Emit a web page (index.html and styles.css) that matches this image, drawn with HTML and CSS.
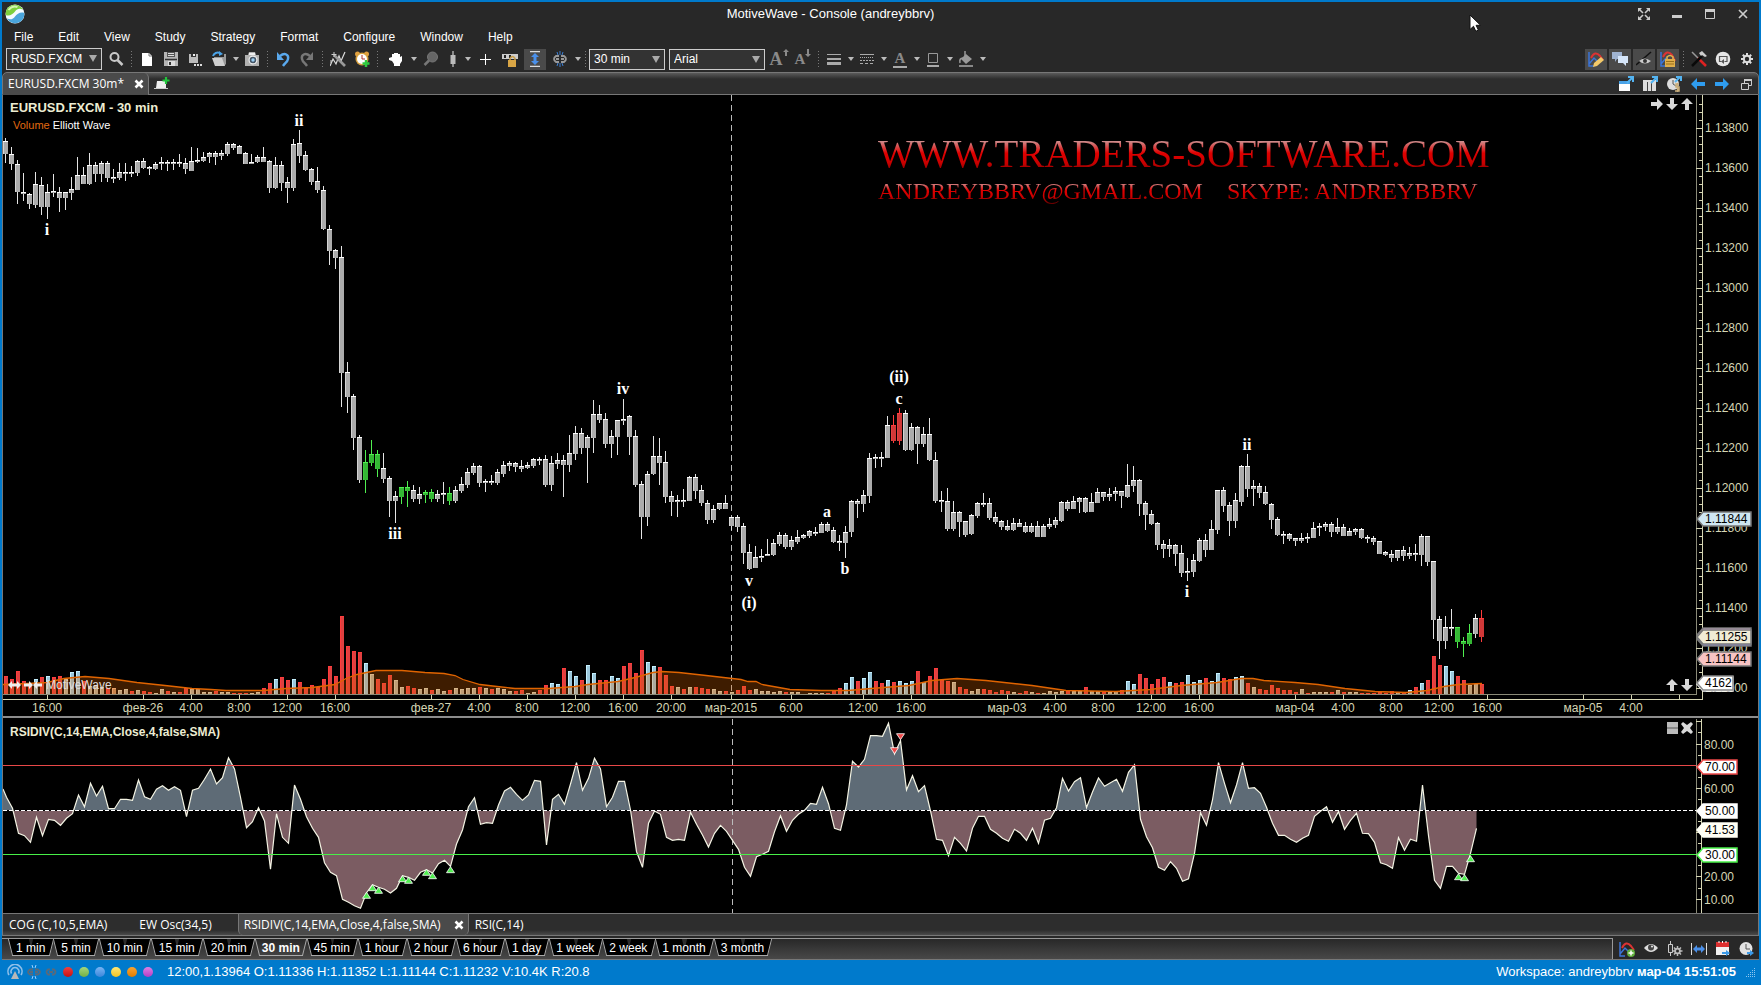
FILE: index.html
```html
<!DOCTYPE html>
<html lang="en">
<head>
    <meta charset="UTF-8">
    <meta name="viewport" content="width=device-width, initial-scale=1.0">
    <title>MotiveWave - Console (andreybbrv)</title>
    <link rel="stylesheet" href="styles.css">
</head>
<body>
<div class="window">
    <header class="titlebar">
        <svg class="logo" viewBox="0 0 20 20"><circle cx="10" cy="10" r="9.5" fill="#f4fbff"/><path d="M.8 11C0 4 6 0 11 .8c4 .6 6 3 7 5-3-2-6-1.300-8 1.700S4 12.500.8 11z" fill="#7ccf3e"/><path d="M19.200 9c.8 7-5.200 11-10.200 10.200-4-.6-6-3-7-5 3 2 6 1.300 8-1.700s6-5 9.200-3.500z" fill="#4aa5dc"/><path d="M3.500 6q4-5 9-3" stroke="#d4f5b0" stroke-width="2" fill="none"/></svg>
        <h1>MotiveWave - Console (andreybbrv)</h1>
        <div class="window-controls">
            <button aria-label="Full screen"><svg viewBox="0 0 16 16"><path d="M3 3l4 4M13 3L9 7M3 13l4-4M13 13L9 9" stroke="#ccc" stroke-width="1.6"/><path d="M2 2h4L2 6zM14 2v4l-4-4zM2 14v-4l4 4zM14 14h-4l4-4z" fill="#ccc"/></svg></button>
            <button aria-label="Minimize"><svg viewBox="0 0 16 16"><path d="M3 9h10v3H3z" fill="#ccc"/></svg></button>
            <button aria-label="Maximize"><svg viewBox="0 0 16 16"><path d="M3.500 3.500h9v9h-9z" fill="none" stroke="#ccc"/><path d="M3 3h10v3H3z" fill="#ccc"/></svg></button>
            <button aria-label="Close"><svg viewBox="0 0 16 16"><path d="M4 4l8 8M12 4l-8 8" stroke="#ccc" stroke-width="1.700"/></svg></button>
        </div>
    </header>
    <svg class="cursor" viewBox="0 0 12 19"><path d="M1 1v14.500l3.500-3.200 2.300 5 2.600-1.200-2.300-4.800h4.500z" fill="#fff" stroke="#111" stroke-width="1"/></svg>

    <nav class="menu">
        <a href="#">File</a><a href="#">Edit</a><a href="#">View</a><a href="#">Study</a><a href="#">Strategy</a><a href="#">Format</a><a href="#">Configure</a><a href="#">Window</a><a href="#">Help</a>
    </nav>

    <div class="toolbar">
        <div class="combo symbol"><input type="text" value="RUSD.FXCM" aria-label="Symbol"></div>
        <button class="tool" aria-label="Search"><svg viewBox="0 0 16 16"><circle cx="6.500" cy="6" r="4" fill="none" stroke="#c8c8c8" stroke-width="2"/><path d="M9.500 9l5 5" stroke="#c8c8c8" stroke-width="2.500"/></svg></button>
        <span class="sep"></span>
        <button class="tool" aria-label="New"><svg viewBox="0 0 16 16"><path d="M3 2h7l3 3v10H3z" fill="#fff"/><path d="M10 2v3h3" fill="none" stroke="#777"/></svg></button>
        <button class="tool" aria-label="Save"><svg viewBox="0 0 16 16"><path d="M1 1h14v14H1z" fill="#b5b5b5"/><path d="M4 1h8v5H4z" fill="#555"/><path d="M5 2.500h6M5 4.500h6" stroke="#ddd"/><path d="M2 8.500h12" stroke="#333" stroke-width="1.500"/><path d="M5 10h7v5H5z" fill="#ddd"/><path d="M6 11h2v3H6z" fill="#333"/></svg></button>
        <button class="tool" aria-label="Save as"><svg viewBox="0 0 16 16"><path d="M2 3h9v9H2z" fill="#bbb"/><path d="M4 3h5v3H4z" fill="#333"/><path d="M6 3h2v2H6z" fill="#eee"/><path d="M7 13h2v2H7zM10 13h2v2h-2zM13 13h2v2h-2z" fill="#ddd"/></svg></button>
        <button class="tool" aria-label="Open"><svg viewBox="0 0 16 16"><path d="M3 6h10V3h2v10l-2 2H4z" fill="#999"/><path d="M1 7h10l3 8H4z" fill="#d0d0d0"/><path d="M2 5c1-3 4-4 7-3" fill="none" stroke="#4aa3e8" stroke-width="2"/><path d="M8 0l4 3-4 2z" fill="#4aa3e8"/></svg></button>
        <button class="caret" aria-label="Open menu"></button>
        <button class="tool" aria-label="Camera"><svg viewBox="0 0 16 16"><path d="M1 4h3l1-3h6l1 3h3v11H1z" fill="#b0b0b0"/><path d="M5 2h6v2H5z" fill="#eee"/><circle cx="9" cy="9" r="4.500" fill="#eee"/><circle cx="9" cy="9" r="3.300" fill="#456"/><circle cx="9" cy="9" r="1.700" fill="#9cd0f4"/></svg></button>
        <span class="sep"></span>
        <button class="tool" aria-label="Undo"><svg viewBox="0 0 16 16"><path d="M5 5c5-4 9-1 8 3-.5 3-3 4-5 7" fill="none" stroke="#5aa9ee" stroke-width="2.400"/><path d="M2 1v8h7z" fill="#5aa9ee"/></svg></button>
        <button class="tool" aria-label="Redo"><svg viewBox="0 0 16 16"><path d="M11 5C6 1 2 4 3 8c.5 3 3 4 5 7" fill="none" stroke="#777" stroke-width="2.400"/><path d="M14 1v8H7z" fill="#777"/></svg></button>
        <span class="sep"></span>
        <button class="tool" aria-label="Elliott tools"><svg viewBox="0 0 16 16"><path d="M0 15l3-7 3 5 3-8 2 5 4-9" fill="none" stroke="#ddd" stroke-width="1.200"/><path d="M4 4l11 11" stroke="#999" stroke-width="2.600"/><path d="M4 1v5M1.500 3.500h5M1 9v3" stroke="#ccc"/></svg></button>
        <button class="tool" aria-label="Add alert"><svg viewBox="0 0 16 16"><circle cx="3.500" cy="3" r="2.500" fill="#e0a040"/><circle cx="12.500" cy="3" r="2.500" fill="#e0a040"/><circle cx="8" cy="8" r="6.500" fill="#d8a03c"/><circle cx="8" cy="8" r="5" fill="#fff"/><path d="M8 4v4h3" fill="none" stroke="#a33"/><path d="M12 9v7M8.500 12.500h7" stroke="#2ecc40" stroke-width="2.500"/></svg></button>
        <span class="sep"></span>
        <div class="tools">
            <button class="tool" aria-label="Hand"><svg viewBox="0 0 16 16"><path d="M1 7l3-1V3h2v3V2h2v4V2h2v4V3h2v3l2-1v5l-2 3v2H6v-2l-2-3-3-1z" fill="#fff"/></svg></button>
            <button class="caret" aria-label="Hand menu"></button>
            <button class="tool" aria-label="Magnify"><svg viewBox="0 0 16 16"><circle cx="9.500" cy="6" r="5" fill="#666" stroke="#777"/><path d="M6 9.500L1.500 14" stroke="#777" stroke-width="2.500"/></svg></button>
            <button class="tool narrow" aria-label="Bar type"><svg viewBox="0 0 16 16"><path d="M8 0v16" stroke="#ccc" stroke-width="1.200"/><path d="M5.500 4h5v9h-5z" fill="#bbb"/></svg></button>
            <button class="caret" aria-label="Bar type menu"></button>
            <button class="tool" aria-label="Crosshair"><svg viewBox="0 0 16 16"><path d="M8.500 3v11M3 8.500h11" stroke="#fff"/></svg></button>
            <button class="tool" aria-label="Lock drawings"><svg viewBox="0 0 16 16"><path d="M0 3h16v5H0z" fill="#ccc"/><path d="M2 4h2v3H2zM7 4h2v3H7z" fill="#222"/><path d="M8 9V7.500q2.500-4 5 0V9" fill="none" stroke="#c9a04e" stroke-width="1.500"/><path d="M6 9h8v7H6z" fill="#d9a545"/></svg></button>
            <button class="tool on" aria-label="Fit vertically"><svg viewBox="0 0 16 16"><path d="M3 .5h10M3 15.500h10" stroke="#ddd" stroke-width="1.300"/><path d="M8 2l4 4H9.500v4H12l-4 4-4-4h2.500V6H4z" fill="#4a90ea"/></svg></button>
            <button class="tool" aria-label="Link"><svg viewBox="0 0 16 16"><path d="M7 5H4q-4 3 0 6h3M9 5h3q4 3 0 6H9M4 8h3M9 8h3" fill="none" stroke="#999" stroke-width="1.800"/><path d="M8 0v4M5 1l1 3M11 1l-1 3M8 12v4M5 15l1-3M11 15l-1-3" stroke="#3b7dd0"/></svg></button>
            <button class="caret" aria-label="Link menu"></button>
        </div>
        <span class="sep"></span>
        <div class="combo period"><select aria-label="Bar size"><option>30 min</option></select></div>
        <div class="combo font"><select aria-label="Font"><option>Arial</option></select></div>
        <button class="tool serif" aria-label="Larger font">A<svg viewBox="0 0 6 8"><path d="M3 0l3 3H4v4H2V3H0z" fill="#8a8a8a"/></svg></button>
        <button class="tool serif small" aria-label="Smaller font">A<svg viewBox="0 0 6 8"><path d="M3 8L0 5h2V0h2v5h2z" fill="#8a8a8a"/></svg></button>
        <span class="sep"></span>
        <button class="tool" aria-label="Line width"><svg viewBox="0 0 16 16"><path d="M1 3.500h14" stroke="#aaa"/><path d="M1 8h14" stroke="#aaa" stroke-width="2"/><path d="M1 12.500h14" stroke="#aaa" stroke-width="3"/></svg></button>
        <button class="caret" aria-label="Line width menu"></button>
        <button class="tool" aria-label="Line style"><svg viewBox="0 0 16 16"><path d="M1 3.500h14" stroke="#aaa"/><path d="M1 6.500h14" stroke="#aaa" stroke-dasharray="1 1"/><path d="M1 9.500h14" stroke="#aaa" stroke-dasharray="2 1"/><path d="M1 12.500h14" stroke="#aaa" stroke-dasharray="3 2"/></svg></button>
        <button class="caret" aria-label="Line style menu"></button>
        <button class="tool serif under" aria-label="Text colour">A</button>
        <button class="caret" aria-label="Text colour menu"></button>
        <button class="tool" aria-label="Line colour"><svg viewBox="0 0 16 16"><path d="M3.500 2.500h9v9h-9z" fill="none" stroke="#999"/><path d="M2 14h12v2H2z" fill="#aaa"/></svg></button>
        <button class="caret" aria-label="Line colour menu"></button>
        <button class="tool" aria-label="Fill colour"><svg viewBox="0 0 16 16"><path d="M8 3l6 5-6 5-5-5z" fill="#999"/><path d="M7 0v8M2 12q-1-5 3-5" fill="none" stroke="#999" stroke-width="1.500"/><path d="M1 14h14v2H1z" fill="#888"/></svg></button>
        <button class="caret" aria-label="Fill colour menu"></button>

        <div class="toolbar-end">
            <button class="tool on" aria-label="Show components"><svg viewBox="0 0 16 16"><path d="M1 1v14h5M1 13l5-6 4 4" fill="none" stroke="#3b74d8" stroke-width="1.500"/><path d="M3 7q4-8 9-2l3 4" fill="none" stroke="#d33" stroke-width="2"/><path d="M13 6l3 3-7 6-4 1 1-4z" fill="#f3c969"/></svg></button>
            <button class="tool on" aria-label="Comments"><svg viewBox="0 0 16 16"><path d="M0 1h10v7H5l-2 3V8H0z" fill="#9fb3d1"/><path d="M6 5h10v7h-2v3l-3-3H6z" fill="#d6e6fa"/></svg></button>
            <button class="tool on" aria-label="Hide lines"><svg viewBox="0 0 16 16"><path d="M0 14L15 1" stroke="#111" stroke-width="1.500"/><path d="M3 10q5-5 12 0-6 5-12 0z" fill="#ccc"/><circle cx="9" cy="10" r="2" fill="#333"/></svg></button>
            <button class="tool on" aria-label="Lock components"><svg viewBox="0 0 16 16"><path d="M1 1v14h5M1 13l5-6" fill="none" stroke="#3b74d8" stroke-width="1.500"/><path d="M3 6q4-8 9-2l3 6" fill="none" stroke="#d33" stroke-width="2"/><path d="M7 9V6q3-3 6 0v3" fill="none" stroke="#ddb34e" stroke-width="1.600"/><path d="M5 8h10v8H5z" fill="#e0ae4a"/><path d="M6 10.500h8M6 13h8" stroke="#9a6f1c"/></svg></button>
            <span class="sep"></span>
            <button class="tool" aria-label="Tools"><svg viewBox="0 0 16 16"><path d="M1 1l6 6" stroke="#999" stroke-width="1.500"/><path d="M7 7l8 8" stroke="#d22" stroke-width="2.500"/><path d="M11 5L1 15" stroke="#0a0a0a" stroke-width="2.500"/><path d="M8 2l3-2 5 5-2 1-3-2-1 1z" fill="#ccc"/></svg></button>
            <button class="tool" aria-label="Replay"><svg viewBox="0 0 16 16"><circle cx="8" cy="8" r="7.300" fill="#e6e6e6"/><path d="M9.500 10.500H12v-5H4.500v5h2" fill="none" stroke="#555" stroke-width="1.200"/><path d="M9 8v5l-3-2.500z" fill="#555"/></svg></button>
            <button class="tool" aria-label="Preferences"><svg viewBox="0 0 16 16"><path d="M8 2v12M2 8h12M3.800 3.800l8.400 8.400M12.200 3.800l-8.400 8.400" stroke="#ddd" stroke-width="2"/><circle cx="8" cy="8" r="4.200" fill="#ddd"/><circle cx="8" cy="8" r="2.200" fill="#282828"/></svg></button>
        </div>
    </div>

    <div class="tabstrip">
        <div class="tab">EURUSD.FXCM 30m* <button class="tab-close" aria-label="Close tab"><svg viewBox="0 0 10 10"><path d="M1.500 1.500l7 7M8.500 1.500l-7 7" stroke="#fff" stroke-width="2.600"/></svg></button></div>
        <button class="tab-add" aria-label="Add tab"><svg viewBox="0 0 16 14"><path d="M3 4h9v7H2z" fill="#eee"/><path d="M0 11.500h14" stroke="#ccc"/><path d="M12 0v7M8.500 3.500h7" stroke="#22c33c" stroke-width="2.200"/></svg></button>
        <div class="tabstrip-end">
            <button class="tool" aria-label="New window"><svg viewBox="0 0 16 16"><path d="M1 5h11v10H1z" fill="#fff"/><path d="M1 5h11v3H1z" fill="#4aa3e8"/><path d="M9 7l5-5M10 1h5v5" fill="none" stroke="#54b4f2" stroke-width="2"/></svg></button>
            <button class="tool" aria-label="Columns"><svg viewBox="0 0 16 16"><path d="M1 4h13v11H1z" fill="#ddd"/><path d="M5.500 6v9M9.500 6v9" stroke="#444"/><path d="M9 7l5-5M10 1h5v5" fill="none" stroke="#54b4f2" stroke-width="2"/></svg></button>
            <button class="tool" aria-label="Account"><svg viewBox="0 0 16 16"><circle cx="7" cy="8" r="6" fill="#ddd"/><path d="M7 4v4l3 2" fill="none" stroke="#555"/><path d="M13 8h-3v3h3v4h-4M11.500 7v9" fill="none" stroke="#c9ae7c" stroke-width="1.500"/><path d="M9 6l5-5M10 1h5v4" fill="none" stroke="#54b4f2" stroke-width="2"/></svg></button>
            <button class="tool" aria-label="Back"><svg viewBox="0 0 16 16"><path d="M1 8l6-6v4h8v4H7v4z" fill="#2f9df0"/></svg></button>
            <button class="tool" aria-label="Forward"><svg viewBox="0 0 16 16"><path d="M15 8L9 2v4H1v4h8v4z" fill="#2f9df0"/></svg></button>
            <button class="tool" aria-label="Restore"><svg viewBox="0 0 16 16"><path d="M6.500 3.500h7v6h-7z" fill="none" stroke="#ccc"/><path d="M6 4h8" stroke="#ccc" stroke-width="2"/><path d="M3.500 7.500h7v6h-7z" fill="#2d2d2d" stroke="#ccc"/></svg></button>
        </div>
    </div>

    <main class="charts">
        <section class="price-chart">
            <div class="plot-row">
                <div class="plot">
                    <svg id="price" height="600"></svg>
                    <div class="plot-title">
                        <h2>EURUSD.FXCM - 30 min</h2>
                        <p><span class="volume">Volume</span> Elliott Wave</p>
                    </div>
                    <div class="banner">
                        <div class="site">WWW.TRADERS-SOFTWARE.COM</div>
                        <div class="contacts"><span>ANDREYBBRV@GMAIL.COM</span><span>SKYPE: ANDREYBBRV</span></div>
                    </div>
                    <div class="plot-tools top">
                        <svg viewBox="0 0 12 12"><path d="M12 6L6 0v4H0v4h6v4z"/></svg><svg viewBox="0 0 12 12"><path d="M6 12l6-6H8V0H4v6H0z"/></svg><svg viewBox="0 0 12 12"><path d="M6 0L0 6h4v6h4V6h4z"/></svg>
                    </div>
                    <div class="plot-tools bottom">
                        <svg viewBox="0 0 12 12"><path d="M6 0L0 6h4v6h4V6h4z"/></svg><svg viewBox="0 0 12 12"><path d="M6 12l6-6H8V0H4v6H0z"/></svg>
                    </div>
                    <div class="brand">
                        <svg viewBox="0 0 34 8"><path d="M0 4l4-4v2.500h5V0l4 4-4 4V5.500H4V8zM25 4l-4-4v2.500h-5v3h5V8zM25 4l4-4v2.500h5v3h-5V8z"/></svg>MotiveWave
                    </div>
                </div>
                <svg id="price-axis" width="62" height="600"></svg>
            </div>
            <svg id="time-axis" height="21"></svg>
        </section>

        <section class="study">
            <div class="plot-row">
                <div class="plot">
                    <svg id="rsi" height="194"></svg>
                    <h2 class="study-title">RSIDIV(C,14,EMA,Close,4,false,SMA)</h2>
                    <div class="plot-tools top">
                        <svg viewBox="0 0 12 12"><path d="M1 0h11v12H1z" fill="#bbb"/><path d="M1 6h11" stroke="#555"/></svg><svg viewBox="0 0 12 12"><path d="M2 0l4 3 4-3 2 2-3 4 3 4-2 2-4-3-4 3-2-2 3-4-3-4z"/></svg>
                    </div>
                </div>
                <svg id="rsi-axis" width="62" height="194"></svg>
            </div>
            <div class="study-tabs">
                <a href="#">COG (C,10,5,EMA)</a>
                <a href="#">EW Osc(34,5)</a>
                <div class="active">RSIDIV(C,14,EMA,Close,4,false,SMA) <button class="tab-close" aria-label="Close study"><svg viewBox="0 0 10 10"><path d="M1.500 1.500l7 7M8.500 1.500l-7 7" stroke="#fff" stroke-width="2.600"/></svg></button></div>
                <a href="#">RSI(C,14)</a>
            </div>
        </section>
    </main>

    <div class="bottom-bar">
        <div class="timeframes">
            <button><span>1 min</span></button><button><span>5 min</span></button><button><span>10 min</span></button><button><span>15 min</span></button><button><span>20 min</span></button><button class="active"><span>30 min</span></button><button><span>45 min</span></button><button><span>1 hour</span></button><button><span>2 hour</span></button><button><span>6 hour</span></button><button><span>1 day</span></button><button><span>1 week</span></button><button><span>2 week</span></button><button><span>1 month</span></button><button><span>3 month</span></button>
        </div>
        <div class="bottom-tools">
            <button class="tool" aria-label="Add study"><svg viewBox="0 0 16 16"><path d="M1 1v14h5M1 13l5-6 4 4" fill="none" stroke="#3b74d8" stroke-width="1.500"/><path d="M3 7q4-8 9-2l3 4" fill="none" stroke="#d33" stroke-width="2"/><circle cx="12" cy="12" r="4" fill="#5fae3c"/><path d="M12 9.500v5M9.500 12h5" stroke="#fff" stroke-width="1.500"/></svg></button>
            <button class="tool" aria-label="Visibility"><svg viewBox="0 0 16 16"><path d="M1 7q7-8 14 0-7 8-14 0z" fill="#ddd"/><circle cx="8" cy="6.500" r="3" fill="#444"/><circle cx="9" cy="5.500" r="1" fill="#eee"/></svg></button>
            <button class="tool" aria-label="Bar settings"><svg viewBox="0 0 16 16"><path d="M3.500 0v15" stroke="#ccc"/><path d="M1.500 3.500h4v8h-4z" fill="#333" stroke="#ccc"/><path d="M10.500 5v10M5.500 10h10M7 6.500l7 7M14 6.500l-7 7" stroke="#bbb" stroke-width="1.500"/><circle cx="10.500" cy="10" r="3.300" fill="#bbb"/><circle cx="10.500" cy="10" r="1.500" fill="#282828"/></svg></button>
            <button class="tool" aria-label="Fit width"><svg viewBox="0 0 16 16"><path d="M.5 2v12M15.500 2v12" stroke="#ddd"/><path d="M2 8l4-4v2.500h4V4l4 4-4 4V9.500H6V12z" fill="#4a90ea"/></svg></button>
            <button class="tool" aria-label="Go to date"><svg viewBox="0 0 16 16"><path d="M1 1h13v13H1z" fill="#f2f2f2"/><path d="M1 1h13v5H1z" fill="#dc3030"/><path d="M4 0v2M7.500 0v2M11 0v2" stroke="#fff"/><path d="M7 12h4" stroke="#3b9ae8" stroke-width="2"/><path d="M11 9l4 3-4 3z" fill="#3b9ae8"/></svg></button>
            <button class="tool" aria-label="Go to time"><svg viewBox="0 0 16 16"><circle cx="7" cy="7.500" r="6.500" fill="#e2e2e2"/><path d="M7 3v5h4" fill="none" stroke="#555"/><path d="M8 12h4" stroke="#3b9ae8" stroke-width="2"/><path d="M11 9l4 3-4 3z" fill="#3b9ae8"/></svg></button>
        </div>
    </div>
</div>

<footer class="status">
    <svg class="signal" viewBox="0 0 16 16"><path d="M2 11A7 7 0 1 1 14 11M4.500 9.500a4 4 0 1 1 7 0" fill="none" stroke="#8fc0ea" stroke-width="1.600"/><path d="M8 7l4 8H4z" fill="#b8b8b8"/></svg>
    <svg class="signal" viewBox="0 0 16 16"><path d="M7 5.500H4q-4 2.500 0 5h3M9 5.500h3q4 2.500 0 5H9M4 8h3M9 8h3" fill="none" stroke="#5a6a7a" stroke-width="1.800"/><path d="M6 1l1 3M10 1L9 4M6 15l1-3M10 15l-1-3" stroke="#9cd0ff"/></svg>
    <svg class="chain" viewBox="0 0 12 16"><path d="M5 5.500H3q-3 2.500 0 5h2M7 5.500h2q3 2.500 0 5H7M4 8h4" fill="none" stroke="#5a6a7a" stroke-width="1.800"/></svg>
    <span class="dot red"></span><span class="dot green"></span><span class="dot blue"></span><span class="dot yellow"></span><span class="dot orange"></span><span class="dot purple"></span>
    <span class="quote">12:00,1.13964 O:1.11336 H:1.11352 L:1.11144 C:1.11232 V:10.4K R:20.8</span>
    <span class="workspace">Workspace: andreybbrv <b>мар-04 15:51:05</b></span>
    <svg class="grip" viewBox="0 0 10 10"><path d="M8 0h1v1H8zM6 2h1v1H6zM8 2h1v1H8zM4 4h1v1H4zM6 4h1v1H6zM8 4h1v1H8zM2 6h1v1H2zM4 6h1v1H4zM6 6h1v1H6zM8 6h1v1H8zM0 8h1v1H0zM2 8h1v1H2zM4 8h1v1H4zM6 8h1v1H6zM8 8h1v1H8z" fill="#8cc6f0"/></svg>
</footer>
<script src="chart.js"></script>
</body>
</html>
```
FILE: styles.css
```css
* {
    box-sizing: border-box;
}
body {
    margin: 0;
    padding: 2px 2px 0;
    background: #007acc;
    color: #fff;
    font: 12px/16px "Liberation Sans", Arial, sans-serif;
    min-height: 100vh;
}
button {
    margin: 0;
    padding: 0;
    border: 0;
    background: none;
    color: inherit;
    font: inherit;
}
a {
    color: inherit;
    text-decoration: none;
}
svg {
    display: block;
}
h1, h2, p {
    margin: 0;
}
.window {
    position: relative;
    background: #282828;
}

/* title and menu */
.titlebar {
    display: flex;
    align-items: center;
    height: 24px;
    padding: 0 4px 0 3px;
}
.logo {
    width: 20px;
    height: 20px;
}
.titlebar h1 {
    flex: 1;
    text-align: center;
    font-size: 13px;
    font-weight: normal;
}
.window-controls {
    display: flex;
    gap: 17px;
    padding-right: 4px;
}
.window-controls svg {
    width: 16px;
    height: 16px;
}
.cursor {
    position: absolute;
    left: calc(100% - 290px);
    top: 12px;
    width: 12px;
    height: 19px;
    z-index: 2;
}
.menu {
    display: flex;
    align-items: center;
    gap: 25px;
    height: 22px;
    padding-left: 12px;
}

/* toolbar */
.toolbar {
    display: flex;
    align-items: center;
    height: 24px;
    padding: 0 0 2px 4px;
}
.tool {
    display: flex;
    align-items: center;
    justify-content: center;
    width: 24px;
    height: 21px;
    flex: none;
}
.tool svg {
    width: 16px;
    height: 16px;
}
.tool.narrow {
    width: 18px;
}
.tool.on {
    background: #4a4a4a;
    width: 22px;
    margin: 0 1px;
}
.tool.serif {
    font: bold 18px/20px "Liberation Serif", serif;
    color: #8a8a8a;
    align-items: flex-start;
}
.tool.serif svg {
    width: 6px;
    height: 8px;
}
.tool.small {
    font-size: 15px;
}
.tool.under {
    display: block;
    font-size: 15px;
    line-height: 15px;
    width: 14px;
    height: 17px;
    margin: 0 5px;
    border-bottom: 2px solid #aaa;
}
.caret {
    display: flex;
    justify-content: center;
    width: 9px;
    flex: none;
}
.caret::before {
    content: "";
    border: 3px solid transparent;
    border-top: 4px solid #bbb;
    border-bottom: 0;
}
.sep {
    width: 1px;
    height: 17px;
    margin: 0 3px;
    flex: none;
    background: repeating-linear-gradient(#777 0 1px, transparent 1px 3px);
}
.tools {
    display: flex;
    align-items: center;
    gap: 1px;
    padding-left: 3px;
}
.combo {
    position: relative;
    height: 21px;
    border: 1px solid #ccc;
    background: #333;
}
.combo::after {
    content: "";
    position: absolute;
    right: 4px;
    top: 6px;
    border: 4px solid transparent;
    border-top: 7px solid #aaa;
    border-bottom: 0;
    pointer-events: none;
}
.combo input,
.combo select {
    display: block;
    appearance: none;
    width: 100%;
    height: 100%;
    padding: 0 4px;
    border: 0;
    border-radius: 0;
    outline: 0;
    background: none;
    color: #fff;
    font: inherit;
}
.combo.symbol {
    width: 96px;
    height: 22px;
    margin-right: 2px;
}
.combo.period {
    width: 76px;
    margin-right: 4px;
}
.combo.font {
    width: 96px;
    margin-right: 2px;
}
.toolbar-end {
    display: flex;
    align-items: center;
    margin-left: auto;
}

/* chart tabs */
.tabstrip {
    display: flex;
    height: 23px;
    border: 1px solid #777;
    border-radius: 5px 5px 0 0;
    background: linear-gradient(#5a5a5a, #2d2d2d 6px);
}
.tab,
.study-tabs {
    font-family: "Open Sans", sans-serif;
}
.tab {
    display: flex;
    align-items: center;
    gap: 10px;
    height: 22px;
    padding: 0 4px 0 5px;
    border-right: 1px solid #777;
    border-radius: 5px 5px 0 0;
    background: #4a4a4a;
}
.tab-close svg {
    width: 10px;
    height: 10px;
}
.tab-add svg {
    width: 16px;
    height: 14px;
    margin-left: 5px;
}
.tabstrip-end {
    display: flex;
    margin-left: auto;
}

/* charts */
.charts {
    border: 1px solid #777;
    border-width: 0 1px;
    background: #000;
}
.plot-row {
    display: flex;
}
.plot {
    position: relative;
    flex: 1;
    min-width: 0;
    overflow: hidden;
}
.plot > svg,
#time-axis {
    width: 100%;
}
.charts text {
    font: 12px "Liberation Sans", Arial, sans-serif;
    fill: #d6d6b4;
}
.charts text.wave {
    font: bold 16px "Liberation Serif", serif;
    fill: #fff;
    text-anchor: middle;
}
.charts text.time {
    text-anchor: middle;
}
.charts text.tag {
    fill: #000;
}
.plot-title,
.study-title {
    position: absolute;
    left: 7px;
    top: 5px;
}
.plot-title h2,
.study-title {
    color: #ececd2;
    font-size: 12px;
    line-height: 16px;
}
.plot-title h2 {
    font-size: 13px;
}
.plot-title p {
    padding: 1px 0 0 3px;
    font-size: 11px;
}
.plot-title .volume {
    color: #e06a10;
}
.banner {
    position: absolute;
    left: 875px;
    top: 36px;
    font-family: "Liberation Serif", serif;
    white-space: nowrap;
    color: transparent;
}
.banner div {
    background: linear-gradient(#c99 20%, #e00000 48%, #c80000 70%, #500 100%);
    background-clip: text;
    -webkit-background-clip: text;
}
.banner .site {
    font-size: 39px;
    line-height: 46px;
}
.banner .contacts {
    display: flex;
    gap: 24px;
    font-size: 24px;
    line-height: 28px;
}
.plot-tools {
    position: absolute;
    right: 3px;
    display: flex;
    gap: 3px;
    fill: #d8d8d8;
}
.plot-tools svg {
    width: 12px;
    height: 12px;
}
.plot-tools.top {
    top: 3px;
}
.plot-tools.bottom {
    bottom: 4px;
}
.brand {
    position: absolute;
    left: 5px;
    bottom: 2px;
    display: flex;
    align-items: center;
    gap: 4px;
    fill: #eee;
    color: #ddd;
}
.brand svg {
    width: 34px;
    height: 8px;
}
.study {
    border-top: 2px solid #8c8c8c;
}
.study > .plot-row {
    padding-top: 1px;
}

/* study tabs */
.study-tabs {
    display: flex;
    height: 23px;
    border-top: 1px solid #777;
    border-bottom: 1px solid #777;
    background: linear-gradient(#2d2d2d 16px, #4a4a4a);
    line-height: 21px;
}
.study-tabs a {
    padding: 0 26px 0 6px;
}
.study-tabs .active {
    display: flex;
    align-items: center;
    gap: 13px;
    padding: 0 4px 0 5px;
    border: 1px solid #777;
    border-width: 0 1px;
    border-radius: 0 0 5px 5px;
    background: #4a4a4a;
}

/* timeframes */
.bottom-bar {
    display: flex;
    height: 24px;
    padding-top: 2px;
    border-bottom: 1px solid #777;
}
.timeframes {
    display: flex;
    flex: 1;
    padding-left: 6px;
    border: 1px solid #999;
    border-width: 1px 1px 0 0;
    background: linear-gradient(#282828, #484848);
}
.timeframes button {
    position: relative;
    height: 17px;
    padding: 0 8px;
}
.timeframes button::before,
.timeframes button::after {
    content: "";
    position: absolute;
    top: 0;
    bottom: 0;
    background: #000;
    border-bottom: 1px solid #aaa;
}
.timeframes button::before {
    left: 2px;
    right: 50%;
    border-left: 1px solid #aaa;
    transform: skewX(14deg);
}
.timeframes button::after {
    left: 50%;
    right: 2px;
    border-right: 1px solid #aaa;
    transform: skewX(-14deg);
}
.timeframes span {
    position: relative;
    z-index: 1;
}
.timeframes .active {
    font-weight: bold;
    padding: 0 7px;
}
.timeframes .active ~ button {
    padding: 0 8px 0 7px;
}
.timeframes .active::before,
.timeframes .active::after {
    background: none;
}
.bottom-tools {
    display: flex;
    padding-left: 2px;
}

/* status */
.status {
    display: flex;
    align-items: center;
    height: 24px;
    padding: 0 3px 0 5px;
    font-size: 13px;
}
.signal {
    width: 16px;
    height: 16px;
    margin-right: 3px;
}
.chain {
    width: 12px;
    height: 16px;
    margin-right: 3px;
}
.dot {
    width: 10px;
    height: 10px;
    margin: 0 3px;
    border-radius: 50%;
}
.dot.red { background: linear-gradient(#f04040, #c81010); }
.dot.green { background: linear-gradient(#a5d77c, #74b044); }
.dot.blue { background: linear-gradient(#78b4f4, #3b86da); }
.dot.yellow { background: linear-gradient(#ffe878, #f4c322); }
.dot.orange { background: linear-gradient(#f9a432, #e07c00); }
.dot.purple { background: linear-gradient(#dc80e4, #b43cc4); }
.quote {
    margin-left: 11px;
}
.workspace {
    margin-left: auto;
}
.grip {
    width: 10px;
    height: 10px;
    margin: 0 0 6px 10px;
    align-self: flex-end;
}
```
FILE: chart.js
```js
// each bar: high, body top, body bottom, low (rows of the price pane), one bar every 6px
const bars = [
    [138,141,154,163],[147,154,164,170],[160,164,192,204],[173,192,194,201],[193,194,204,209],[172,184,205,208],[177,185,207,215],[184,192,207,219],[174,191,193,197],[187,192,198,212],
    [192,192,198,210],[177,189,193,200],[157,175,190,190],[167,175,184,184],[153,165,184,185],[162,165,174,182],[161,163,174,182],[161,163,178,182],[169,177,179,183],[163,172,178,180],
    [163,172,173,181],[166,172,173,177],[160,161,173,176],[158,161,168,169],[166,167,169,175],[162,164,169,170],[157,162,164,170],[160,162,164,171],[159,162,164,170],[154,162,164,167],
    [158,163,169,174],[147,161,171,171],[148,160,162,163],[152,157,161,162],[152,153,157,163],[151,153,157,165],[150,153,156,160],[142,144,154,156],[143,144,148,150],[145,146,154,154],
    [152,153,164,164],[154,162,164,164],[155,157,162,163],[147,157,162,162],[160,161,188,193],[157,165,188,189],[161,165,183,191],[177,182,188,203],[139,144,188,191],[130,143,156,163],
    [151,155,170,171],[168,169,182,185],[167,181,190,193],[186,190,229,230],[225,229,251,265],[249,250,258,269],[246,257,373,407],[362,372,397,413],[394,396,438,450],[435,437,480,483],
    [450,462,480,493],[440,454,463,466],[450,454,469,477],[453,468,479,483],[476,478,501,517],[491,496,501,523],[487,487,497,504],[481,487,491,507],[485,490,499,502],[487,494,499,504],
    [490,492,495,503],[489,492,499,502],[490,494,499,502],[482,493,495,504],[487,493,501,505],[486,490,501,503],[477,484,491,493],[468,472,485,488],[463,466,473,475],[465,466,483,487],
    [479,481,483,492],[475,481,483,485],[469,472,483,485],[461,465,474,477],[461,463,466,471],[462,463,467,472],[460,466,469,472],[462,465,468,469],[458,459,466,468],[457,459,461,465],
    [455,459,485,487],[456,463,485,491],[453,460,464,469],[455,460,465,497],[435,453,465,472],[426,433,454,460],[428,433,448,454],[435,437,448,483],[400,414,438,453],[405,414,420,423],
    [413,419,444,448],[430,436,444,458],[420,420,437,455],[399,419,421,425],[415,416,437,455],[430,436,485,487],[481,484,517,539],[471,474,517,526],[436,456,474,475],[438,456,463,485],
    [451,462,497,503],[491,496,502,516],[495,500,502,517],[489,500,502,507],[476,477,501,501],[474,477,491,499],[485,490,503,506],[500,503,520,524],[505,509,520,523],[503,503,509,510],
    [495,503,509,509],[517,517,526,530],[515,517,527,532],[523,526,553,564],[544,552,569,570],[546,557,568,568],[549,556,558,562],[539,554,556,556],[539,543,555,556],[532,535,544,546],
    [533,535,547,549],[536,540,547,550],[530,537,542,544],[534,535,538,539],[530,531,536,538],[527,532,534,536],[522,524,533,533],[522,524,531,532],[527,530,542,543],[535,541,543,551],
    [526,532,543,558],[500,501,532,537],[499,501,504,518],[490,495,504,512],[453,458,496,503],[454,457,459,468],[452,457,459,467],[416,425,458,458],[415,425,441,443],[408,413,441,445],
    [410,413,450,451],[423,427,450,451],[426,427,444,464],[427,434,444,447],[418,434,460,461],[452,460,501,503],[491,500,502,512],[488,501,529,531],[501,512,529,531],[511,512,522,537],
    [521,521,535,537],[514,515,534,535],[502,503,516,518],[493,503,505,507],[498,503,518,520],[512,517,522,524],[520,521,527,530],[520,526,530,531],[518,523,530,531],[519,523,527,527],
    [522,526,532,533],[523,526,532,533],[521,526,537,537],[524,526,537,537],[518,524,527,529],[517,520,525,528],[501,502,521,522],[500,502,509,511],[496,501,509,509],[497,498,502,513],
    [497,498,512,513],[493,502,512,512],[488,492,503,503],[492,492,497,501],[488,494,497,501],[487,491,494,501],[491,491,496,508],[464,485,497,498],[466,480,486,492],[479,480,504,516],
    [501,503,515,530],[510,514,524,525],[522,523,545,550],[540,544,549,558],[539,545,549,557],[544,545,554,566],[545,553,573,577],[558,571,573,581],[554,560,572,577],[538,540,561,562],
    [534,540,550,557],[520,529,550,550],[490,490,530,534],[487,490,506,512],[502,505,521,536],[493,500,521,528],[465,466,502,506],[454,466,489,497],[480,486,489,506],[483,486,493,498],
    [486,492,504,505],[503,504,520,529],[517,519,535,536],[531,534,536,544],[533,534,539,541],[538,538,541,546],[533,538,541,543],[533,537,539,543],[522,528,538,538],[523,526,528,536],
    [522,524,527,531],[522,524,532,537],[518,527,532,534],[524,527,536,536],[528,531,536,536],[528,529,532,535],[528,529,538,539],[535,537,539,543],[536,538,542,545],[541,541,554,554],
    [551,552,555,556],[550,554,558,562],[550,550,558,561],[546,550,556,561],[547,553,556,559],[544,553,555,561],[534,536,555,566],[536,536,562,566],[561,561,620,639],[616,619,641,659],
    [616,627,641,649],[609,627,629,636],[627,627,642,648],[637,641,644,657],[624,633,644,646],[614,618,634,638],[610,618,637,642]
];
const greenBars = [60, 61, 62, 66, 67, 70, 71, 74, 242, 243, 244];
const redBars = [148, 149, 246];

// colour (r/b/g/t) and height of every volume bar
const volume = ('r18 r15 r23 r13 r8 b15 r17 b18 r17 r18 g15 b22 b23 r13 g8 g9 g7 r6 t6 g4 g5 r3 g4 r3 r2 g1 g5 r3 g2 r2 r6 g5 g5 g2 g2 r3 g2 g2 r1 r1 ' +
    'r1 g1 g2 r6 r11 b15 r17 r14 b15 r12 r6 r9 r7 r15 r28 r18 r78 r48 r43 r42 b31 g20 r15 r11 r19 g14 g7 r8 r6 g5 g6 r4 g5 g3 r4 g6 g5 g6 g6 r7 ' +
    'g6 r5 g6 g5 g3 r3 r4 g1 g2 r4 r9 b11 b10 r26 b23 b18 r14 b29 b21 r14 r14 b18 b16 r28 r31 r21 r44 b32 b28 r27 r19 r8 g7 r5 g7 r7 r6 r5 g5 g3 ' +
    'r3 g2 r4 r8 r4 g5 g3 g3 g2 g3 r2 g2 g2 g0 g1 g1 g1 r1 r3 r6 b11 b17 r13 b16 b22 r13 r11 b14 r12 b13 b11 b13 r23 b12 r18 r26 r14 r13 g12 r7 ' +
    'r5 g3 g5 r5 r4 r2 r4 r3 g2 r1 r3 g2 r1 g1 g3 g2 g3 r3 g3 g3 r7 g3 g3 r2 g2 g3 r4 b13 b10 r20 r16 r10 r15 r17 b12 r11 r12 b19 b12 b14 ' +
    'r16 b13 b21 r16 r15 b17 b18 r11 g7 r5 r4 r9 r6 r4 r4 r2 g5 r1 g2 g2 g2 r2 g4 r2 g2 g2 r1 r1 r1 r2 r1 r3 g2 r2 b4 r7 b11 r14 r38 r29 ' +
    'b28 b23 r18 r14 g9 g10 r10').split(' ');
const volumeColors = { r: ['#e04040', '#ff3c3c'], b: ['#9cc8dc', '#c4f0ff'], g: ['#b4b4a4', '#d4d4c0'], t: ['#c09068', '#e8b890'] };

// moving average of the volume, x/y pairs
const volumeAverage = [[0,684],[28,683],[47,682],[64,678],[85,676],[109,678],[137,682],[165,685],[192,688],[211,689],[226,690],[263,690],[286,688],[312,687],[335,684],[346,678],[357,674],[376,670],[402,670],[425,672],[444,673],[455,675],[463,679],[480,684],[497,686],[515,688],[549,688],[575,686],[588,684],[618,681],[635,677],[653,672],[662,671],[679,672],[706,675],[741,679],[748,681],[756,681],[762,684],[790,689],[821,690],[848,690],[871,688],[909,685],[932,680],[957,678],[986,680],[1032,685],[1066,690],[1116,691],[1150,689],[1181,685],[1217,682],[1241,678],[1253,678],[1264,680],[1295,682],[1318,684],[1345,688],[1375,691],[1406,692],[1427,690],[1444,686],[1458,684],[1482,683]];

// rsi curve, one value per bar, thirds of a pixel
const rsi = [262,295,370,377,397,322,377,328,331,346,325,311,255,290,220,258,229,296,296,268,268,271,210,260,268,238,227,241,230,241,320,241,235,208,177,222,203,143,177,262,353,335,293,333,478,311,382,400,225,268,320,355,382,458,487,497,568,577,587,595,548,524,532,538,549,535,497,502,511,487,479,489,461,451,469,402,360,290,263,343,338,340,285,243,232,253,271,255,211,214,405,268,253,283,222,158,241,205,145,177,
    290,262,214,214,300,425,472,340,303,313,382,391,388,391,307,343,375,411,370,346,364,391,418,472,499,440,433,424,365,317,364,331,313,301,280,283,232,281,355,361,285,154,171,148,77,77,79,40,131,92,240,197,245,227,303,388,391,437,382,400,423,355,319,319,358,370,385,394,358,370,391,355,400,331,325,293,205,243,215,203,293,246,204,229,218,208,244,187,164,328,380,413,472,481,455,475,514,506,430,308,
    346,270,158,220,278,225,158,235,233,250,292,340,376,376,388,397,385,376,319,304,290,337,305,358,331,310,370,371,397,458,464,475,383,421,388,394,225,377,511,535,469,469,490,493,430,355];
const buySignals = [[60,557],[61,534],[62,542],[66,507],[67,512],[70,488],[71,498],[74,480],[242,501],[243,504],[244,447]];
const sellSignals = [[148,121],[149,79]];

const waves = [['i',44,140],['ii',296,31],['iii',392,444],['iv',620,299],['v',746,491],['(i)',746,513],['a',824,422],['b',842,479],['c',896,309],['(ii)',896,287],['i',1184,502],['ii',1244,355]];

const times = [[7,'16:00'],[23,'фев-26'],[31,'4:00'],[39,'8:00'],[47,'12:00'],[55,'16:00'],[71,'фев-27'],[79,'4:00'],[87,'8:00'],[95,'12:00'],[103,'16:00'],[111,'20:00'],[121,'мар-2015'],[131,'6:00'],[143,'12:00'],[151,'16:00'],[167,'мар-03'],[175,'4:00'],[183,'8:00'],[191,'12:00'],[199,'16:00'],[215,'мар-04'],[223,'4:00'],[231,'8:00'],[239,'12:00'],[247,'16:00'],[263,'мар-05'],[271,'4:00'],[279,'']];

const STEP = 6;
const TOP = 95;
const FLOOR = 599;

const rect = (x, y, w, h, fill) => `<rect x="${x}" y="${y}" width="${w}" height="${h}" fill="${fill}"/>`;
const text = (x, y, str, cls) => `<text x="${x}" y="${y}" class="${cls || ''}">${str}</text>`;

function drawPrice() {
    let out = '<path d="M728.500 0V599" stroke="#bbb" stroke-dasharray="6 4"/>';
    volume.forEach((v, i) => {
        const [fill, light] = volumeColors[v[0]];
        const h = Number(v.slice(1));
        out += rect(i * STEP + 1, FLOOR - h, 4, h, fill) + rect(i * STEP + 1, FLOOR - h, 1, h, light) + (h ? rect(i * STEP + 1, FLOOR - h, 4, 1, light) : '');
    });
    const line = volumeAverage.map(([x, y]) => `${Math.max(0, x - 3)} ${y - TOP}.5`).join('L');
    out += `<path d="M${line}V${FLOOR}H0z" fill="#e06400" fill-opacity=".28"/><path d="M${line}" fill="none" stroke="#e06400" stroke-width="1.3"/>`;
    bars.forEach(([high, top, bottom, low], i) => {
        let fill = '#ababab', side = '#d4d4d4', light = '#fff', wick = '#e4e4e4';
        if (greenBars.includes(i)) { fill = '#35b835'; side = '#3ccc3c'; light = wick = '#50f050'; }
        if (redBars.includes(i)) { fill = '#d03838'; side = '#e64040'; light = wick = '#ff3c3c'; }
        const x = i * STEP;
        const h = Math.max(2, bottom - top);
        out += rect(x + 2, high - TOP, 1, low - high, wick);
        out += rect(x, top - TOP, 5, h, fill) + rect(x, top - TOP, 1, h, side) + rect(x, top - TOP, 5, 1, light);
    });
    waves.forEach(([label, x, y]) => out += text(x, y, label, 'wave'));
    out += '<path d="M0 599.500H4000" stroke="#8a8a78"/>';
    document.getElementById('price').innerHTML = out;
}

function tag(y, w, fill, stroke, label) {
    return `<path d="M1 ${y}l6-7H${w}v14H7z" fill="${fill}" stroke="${stroke}" stroke-width="1.5"/>` + (label ? text(9, y + 4, label, 'tag') : '');
}

function drawPriceAxis() {
    let out = '<path d="M.5 0V599M0 599.500H1" stroke="#8a8a78"/><path d="M6.500 0V605" stroke="#d6d6b4"/>';
    for (let y = 33, p = 1.138; y < 600; y += 40, p -= 0.002) {
        out += rect(0, y, 6, 1, '#d6d6b4') + text(9, y + 4, p.toFixed(5));
    }
    for (let y = 9; y < 600; y += 8) {
        out += rect(3, y, 3, 1, '#d6d6b4');
    }
    out += tag(424, 55, '#cfe6f2', '#777', '1.11844');
    out += tag(540, 55, '#f4c8f4', '#777', '') + tag(544, 55, '#9c9cf0', '#777', '') + tag(542, 55, '#f0ecd6', '#777', '1.11255');
    out += tag(564, 55, '#f8c4c4', '#777', '1.11144');
    out += tag(589, 37, '#fff', '#fff', '') + tag(588, 37, '#fff', '#888', '4162');
    document.getElementById('price-axis').innerHTML = out;
}

function drawTimeAxis() {
    const axis = document.getElementById('time-axis');
    let out = `<path d="M0 4.500H${axis.clientWidth - 56}" stroke="#d6d6b4"/><path d="M${axis.clientWidth - 55.5} 0V5" stroke="#d6d6b4"/>`;
    times.forEach(([i, label]) => {
        out += rect(i * STEP + 2, 0, 1, 5, '#d6d6b4') + (label ? text(i * STEP + 2, 17, label, 'time') : '');
    });
    axis.innerHTML = out;
}

function drawRsi() {
    const row = v => (v / 3 - 9).toFixed(1);
    const points = rsi.map((v, i) => `${i * STEP + 3.5} ${row(v)}`);
    const line = `M0 70L${points.join('L')}`;
    let out = '<defs><clipPath id="above"><path d="M0 0H4000V91H0z"/></clipPath><clipPath id="below"><path d="M0 92H4000V194H0z"/></clipPath></defs>';
    out += `<path d="${line}V91.500H0z" fill="#5e6b76" clip-path="url(#above)"/><path d="${line}V91.500H0z" fill="#7b5c62" clip-path="url(#below)"/>`;
    out += '<path d="M729.500 0V194" stroke="#bbb" stroke-dasharray="6 4"/>';
    out += `<path d="${line}" fill="none" stroke="#f4f4e4" stroke-width="1.2"/>`;
    out += '<path d="M0 46.500H4000" stroke="#e84848"/><path d="M0 91.500H4000" stroke="#fff" stroke-dasharray="4 2"/><path d="M0 135.500H4000" stroke="#48f048"/>';
    buySignals.forEach(([i, v]) => out += `<path d="M${i * STEP + 3.5} ${row(v - 10)}l4 6h-8z" fill="#50f050" stroke="#fff" stroke-width=".8"/>`);
    sellSignals.forEach(([i, v]) => out += `<path d="M${i * STEP + 3.5} ${row(v + 10)}l4-6h-8z" fill="#f04848" stroke="#fff" stroke-width=".8"/>`);
    document.getElementById('rsi').innerHTML = out;
}

function drawRsiAxis() {
    let out = '<path d="M.5 0V194" stroke="#8a8a78"/><path d="M5.500 0V194" stroke="#d6d6b4"/>';
    for (let v = 90; v > 5; v -= 5) {
        const y = Math.round(91 + (50 - v) * 2.215);
        out += v % 10 ? rect(2, y, 3, 1, '#d6d6b4') : rect(0, y, 5, 1, '#d6d6b4');
    }
    [80, 60, 20, 10].forEach(v => out += text(8, Math.round(96 + (50 - v) * 2.215), v.toFixed(2)));
    out += tag(48, 41, '#fff', '#f04848', '70.00') + tag(92, 41, '#fff', '#fff', '50.00');
    out += tag(111, 41, '#fffff4', '#fffff4', '41.53') + tag(136, 41, '#fff', '#48f048', '30.00');
    document.getElementById('rsi-axis').innerHTML = out;
}

drawPrice();
drawPriceAxis();
drawTimeAxis();
drawRsi();
drawRsiAxis();
window.addEventListener('resize', drawTimeAxis);
```
